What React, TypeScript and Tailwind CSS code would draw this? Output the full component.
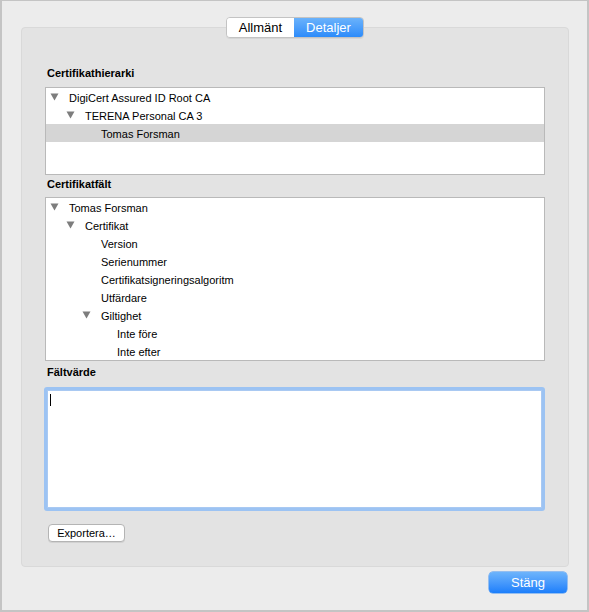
import React from "react";

const Tri = () => (
  <svg width="9" height="8" viewBox="0 0 9 8" className="shrink-0">
    <path d="M0.5 0.5 L8.5 0.5 L4.5 7.5 Z" fill="#7d7d7d" />
  </svg>
);

type Row = { text: string; level: number; open?: boolean; selected?: boolean };

const TreeRow = ({ r }: { r: Row }) => (
  <div
    className={`flex h-[18px] items-center text-[11px] text-black ${r.selected ? "bg-[#d5d5d5]" : ""}`}
    style={{ paddingLeft: 4 + r.level * 16 }}
  >
    <div className="flex w-[19px] items-center">{r.open ? <Tri /> : null}</div>
    <span className="leading-[18px] pt-[1px]">{r.text}</span>
  </div>
);

const hier: Row[] = [
  { text: "DigiCert Assured ID Root CA", level: 0, open: true },
  { text: "TERENA Personal CA 3", level: 1, open: true },
  { text: "Tomas Forsman", level: 2, selected: true },
];

const fields: Row[] = [
  { text: "Tomas Forsman", level: 0, open: true },
  { text: "Certifikat", level: 1, open: true },
  { text: "Version", level: 2 },
  { text: "Serienummer", level: 2 },
  { text: "Certifikatsigneringsalgoritm", level: 2 },
  { text: "Utfärdare", level: 2 },
  { text: "Giltighet", level: 2, open: true },
  { text: "Inte före", level: 3 },
  { text: "Inte efter", level: 3 },
];

export default function App() {
  return (
    <div
      className="w-[589px] h-[612px] overflow-hidden bg-[#ececec] border-l-[2px] border-r-[2px] border-t border-b-[2px] border-[#c4c4c4]"
      style={{ fontFamily: '"Liberation Sans", Arial, sans-serif' }}
    >
      <div className="flex flex-col pl-[19px] pt-[16px]">
        {/* Tabs */}
        <div className="relative z-10 flex justify-center w-[548px] mb-[-11px]">
          <div className="flex h-[21px] rounded-[4px] border border-[#c3c3c3] overflow-hidden shadow-[0_1px_0_rgba(0,0,0,0.06)] text-[13px]">
            <div className="flex w-[67px] items-center justify-center bg-white text-black">Allmänt</div>
            <div className="flex w-[69px] items-center justify-center bg-gradient-to-b from-[#6ab2fb] to-[#2b8bfa] text-white">
              Detaljer
            </div>
          </div>
        </div>

        {/* Box */}
        <div className="flex h-[540px] w-[548px] flex-col rounded-[4px] border border-[#d9d9d9] bg-[#e3e3e3] px-[23px]">
          <div className="mt-[38px] h-[14px] text-[11px] font-bold leading-[14px] text-black pl-[2px]">Certifikathierarki</div>
          <div className="mt-[7px] h-[88px] w-[500px] border border-[#b9b9b9] bg-white">
            {hier.map((r, i) => (
              <TreeRow key={i} r={r} />
            ))}
          </div>
          <div className="mt-[2px] h-[14px] text-[11px] font-bold leading-[14px] text-black pl-[2px]">Certifikatfält</div>
          <div className="mt-[6px] h-[164px] w-[500px] border border-[#b9b9b9] bg-white">
            {fields.map((r, i) => (
              <TreeRow key={i} r={r} />
            ))}
          </div>
          <div className="mt-[4px] h-[14px] text-[11px] font-bold leading-[14px] text-black pl-[2px]">Fältvärde</div>
          <div className="mt-[8px] ml-[-1px] h-[124px] w-[501px] rounded-[3px] border-[3px] border-[#9cc3f3] bg-white">
            <div className="border border-[#a9c9f2] h-full pl-[2px] pt-[3px]">
              <div className="h-[12px] w-px bg-black" />
            </div>
          </div>
          <div className="mt-[13px] ml-[3px]">
            <button className="flex h-[18px] w-[77px] items-center justify-center rounded-[4px] border border-[#b4b4b4] bg-white text-[11px] text-black shadow-[0_1px_0_rgba(0,0,0,0.08)]">
              Exportera…
            </button>
          </div>
        </div>

        {/* Bottom */}
        <div className="flex w-[548px] justify-end pr-[2px] mt-[5px]">
          <button className="flex h-[21px] w-[78px] items-center justify-center rounded-[4px] bg-gradient-to-b from-[#6db4fb] to-[#1a7efb] text-[13px] text-white shadow-[0_0_0_0.5px_#3f8ff2]">
            Stäng
          </button>
        </div>
      </div>
    </div>
  );
}
